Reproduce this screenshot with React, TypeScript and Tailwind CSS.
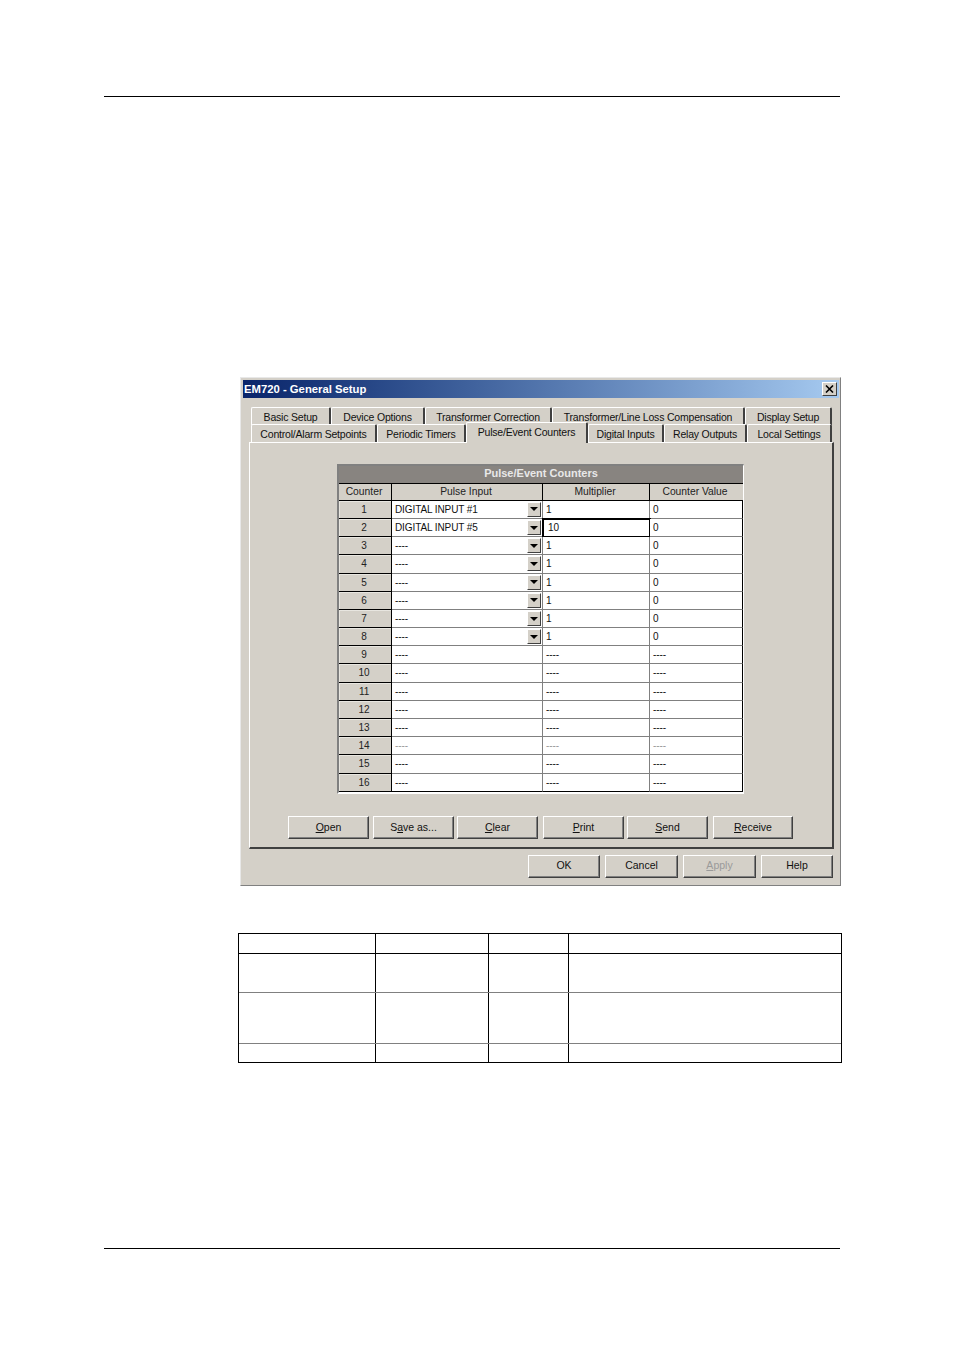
// EM720 General Setup dialog on a manual page
const FONT = "font-['Liberation_Sans',Arial,sans-serif]";

const topTabs = [
  { label: "Basic Setup", w: "w-[80px]" },
  { label: "Device Options", w: "w-[94px]" },
  { label: "Transformer Correction", w: "w-[127px]" },
  { label: "Transformer/Line Loss Compensation", w: "w-[193px]" },
  { label: "Display Setup", w: "w-[87px]" },
];

const bottomTabs = [
  { label: "Control/Alarm Setpoints", w: "w-[126px]" },
  { label: "Periodic Timers", w: "w-[89px]" },
  { label: "Pulse/Event Counters", w: "w-[122px]", active: true },
  { label: "Digital Inputs", w: "w-[76px]" },
  { label: "Relay Outputs", w: "w-[83px]" },
  { label: "Local Settings", w: "w-[85px]" },
];

function Tab({ label, w, active }: { label: string; w: string; active?: boolean }) {
  if (active) {
    return (
      <div className={`${w} relative z-10 -mt-[2px] h-[21px] -mb-px whitespace-nowrap bg-[#d4d0c8] border-t border-l border-white border-r-2 border-r-[#404040] rounded-t-[2px] text-center text-[10.5px] leading-[18px] tracking-[-0.2px] text-[#111]`}>
        {label}
      </div>
    );
  }
  return (
    <div className={`${w} h-[18px] whitespace-nowrap bg-[#d4d0c8] border-t border-l border-white border-r-2 border-r-[#404040] rounded-t-[2px] text-center text-[10.5px] leading-[19px] tracking-[-0.2px] text-[#111]`}>
      {label}
    </div>
  );
}

function Combo({ text }: { text: string }) {
  return (
    <div className="flex h-full items-center justify-between pl-[3px] pr-px">
      <span>{text}</span>
      <span className="flex h-[15px] w-[14px] items-center justify-center bg-[#d4d0c8] border border-white border-r-[#404040] border-b-[#404040]">
        <span className="h-0 w-0 border-x-[4px] border-t-[4px] border-x-transparent border-t-black" />
      </span>
    </div>
  );
}

function GridRow({ n }: { n: number }) {
  const combo = n <= 8;
  const pulse = n === 1 ? "DIGITAL INPUT #1" : n === 2 ? "DIGITAL INPUT #5" : "----";
  const mult = n === 2 ? "10" : n <= 8 ? "1" : "----";
  const val = n <= 8 ? "0" : "----";
  const dim = n === 14 ? "text-[#999]" : "text-[#111]";
  const line = n === 16 ? "border-b-black" : "border-b-[#808080]";
  return (
    <div className={`flex h-[18.2px] text-[10px] leading-[17px] tracking-[-0.1px] ${dim}`}>
      <div className="w-[53px] shrink-0 border-b border-b-black border-r border-r-black bg-[#d4d0c8] pr-[2px] text-center text-[#222] shadow-[inset_1px_1px_0_#e8e6e0]">
        {n}
      </div>
      <div className={`w-[151px] shrink-0 border-b border-r border-r-[#808080] bg-white ${line}`}>
        {combo ? <Combo text={pulse} /> : <div className="pl-[3px]">{pulse}</div>}
      </div>
      <div className={`w-[107px] shrink-0 border-b border-r border-r-[#808080] bg-white pl-[3px] ${line} ${n === 2 ? "outline-2 -outline-offset-1 outline-black" : ""}`}>
        <span className={n === 2 ? "pl-[2px]" : ""}>{mult}</span>
      </div>
      <div className={`flex-1 border-b border-r border-r-black bg-white pl-[3px] ${line}`}>{val}</div>
    </div>
  );
}

function PushButton({ label, w, disabled, extra, lead }: { label: React.ReactNode; w: string; disabled?: boolean; extra?: string; lead?: string }) {
  return (
    <div className={`${w} ${extra ?? ""} ${lead ?? "leading-[20px]"} h-[23px] bg-[#d4d0c8] border border-t-white border-l-white border-r-[#404040] border-b-[#404040] shadow-[inset_-1px_-1px_0_#808080] text-center text-[10.5px] ${disabled ? "text-[#9a9a9a]" : "text-[#111]"}`}>
      {label}
    </div>
  );
}

function LowerTableRow({ h, border }: { h: string; border: string }) {
  return (
    <div className={`flex ${h} ${border}`}>
      <div className="w-[137px] border-r border-black" />
      <div className="w-[113px] border-r border-black" />
      <div className="w-[80px] border-r border-black" />
      <div className="flex-1" />
    </div>
  );
}

export default function App() {
  return (
    <div className={`${FONT} h-[1351px] w-[954px] overflow-hidden bg-white pt-[96px]`}>
      <div className="ml-[104px] w-[736px] border-t border-black" />

      {/* dialog */}
      <div className="ml-[240px] mt-[280px] h-[509px] w-[601px] border border-[#808080] border-t-[#e8e8e8] border-l-[#e8e8e8] bg-[#d4d0c8] pl-[2px] pr-[1px] pt-[2px]">
        <div className="flex h-[18px] items-center justify-between bg-gradient-to-r from-[#0a246a] to-[#a6caf0] pl-px pr-[2px]">
          <span className="text-[11.3px] font-bold text-white">EM720 - General Setup</span>
          <span className="flex h-[14px] w-[15px] items-center justify-center border border-white border-r-[#404040] border-b-[#404040] bg-[#d4d0c8]">
            <svg width="9" height="8" viewBox="0 0 9 8">
              <path d="M1 0.5 L8 7.5 M8 0.5 L1 7.5" stroke="#000" strokeWidth="1.6" />
            </svg>
          </span>
        </div>

        {/* tabs */}
        <div className="ml-[8px] mt-[9px] flex">
          {topTabs.map((t) => (
            <Tab key={t.label} label={t.label} w={t.w} />
          ))}
        </div>
        <div className="relative ml-[8px] -mt-px flex">
          {bottomTabs.map((t) => (
            <Tab key={t.label} label={t.label} w={t.w} active={t.active} />
          ))}
        </div>

        {/* panel */}
        <div className="ml-[6px] h-[407px] w-[585px] border border-white border-r-2 border-b-2 border-r-[#404040] border-b-[#404040] pt-[21px]">
          <div className="ml-[87px] w-[407px] border-2 border-[#808080] border-r border-r-white border-b-white">
            <div className="h-[18px] border-b border-black bg-[#888480] text-center text-[11px] font-bold leading-[14px] text-[#e8e8e8]">
              Pulse/Event Counters
            </div>
            <div className="flex h-[16.8px] border-b border-black bg-[#d4d0c8] text-center text-[10.3px] leading-[16px] text-[#222]">
              <div className="w-[53px] shrink-0 border-r border-black pr-[2px]">Counter</div>
              <div className="w-[151px] shrink-0 border-r border-black pr-[2px]">Pulse Input</div>
              <div className="w-[107px] shrink-0 border-r border-black pr-[2px]">Multiplier</div>
              <div className="flex-1 pr-[3px]">Counter Value</div>
            </div>
            {Array.from({ length: 16 }, (_, i) => (
              <GridRow key={i} n={i + 1} />
            ))}
          </div>

          <div className="ml-[38px] mt-[22px] flex">
            <PushButton w="w-[81px]" label={<><u>O</u>pen</>} />
            <PushButton w="w-[81px]" extra="ml-[4px]" label={<>S<u>a</u>ve as...</>} />
            <PushButton w="w-[81px]" extra="ml-[3px]" label={<><u>C</u>lear</>} />
            <PushButton w="w-[81px]" extra="ml-[5px]" label={<><u>P</u>rint</>} />
            <PushButton w="w-[81px]" extra="ml-[3px]" label={<><u>S</u>end</>} />
            <PushButton w="w-[80px]" extra="ml-[5px]" label={<><u>R</u>eceive</>} />
          </div>
        </div>

        <div className="mr-[6px] mt-[6px] flex justify-end gap-[5px]">
          <PushButton w="w-[72px]" lead="leading-[18px]" label="OK" />
          <PushButton w="w-[73px]" lead="leading-[18px]" label="Cancel" />
          <PushButton w="w-[73px]" lead="leading-[18px]" label={<><u>A</u>pply</>} disabled />
          <PushButton w="w-[72px]" lead="leading-[18px]" label="Help" />
        </div>
      </div>

      {/* empty parameter table */}
      <div className="ml-[238px] mt-[47px] w-[604px] border border-black">
        <LowerTableRow h="h-[20px]" border="border-b border-black" />
        <LowerTableRow h="h-[39px]" border="border-b border-[#808080]" />
        <LowerTableRow h="h-[51px]" border="border-b border-[#808080]" />
        <LowerTableRow h="h-[18px]" border="" />
      </div>

      <div className="ml-[104px] mt-[185px] w-[736px] border-t border-black" />
    </div>
  );
}
